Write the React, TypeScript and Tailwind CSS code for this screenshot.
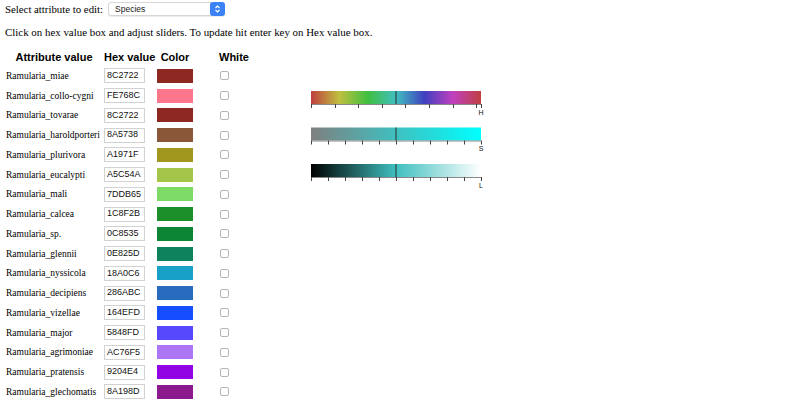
import React from 'react';

const rows: [string, string][] = [
  ['Ramularia_miae', '8C2722'],
  ['Ramularia_collo-cygni', 'FE768C'],
  ['Ramularia_tovarae', '8C2722'],
  ['Ramularia_haroldporteri', '8A5738'],
  ['Ramularia_plurivora', 'A1971F'],
  ['Ramularia_eucalypti', 'A5C54A'],
  ['Ramularia_mali', '7DDB65'],
  ['Ramularia_calcea', '1C8F2B'],
  ['Ramularia_sp.', '0C8535'],
  ['Ramularia_glennii', '0E825D'],
  ['Ramularia_nyssicola', '18A0C6'],
  ['Ramularia_decipiens', '286ABC'],
  ['Ramularia_vizellae', '164EFD'],
  ['Ramularia_major', '5848FD'],
  ['Ramularia_agrimoniae', 'AC76F5'],
  ['Ramularia_pratensis', '9204E4'],
  ['Ramularia_glechomatis', '8A198D'],
];

const W = 170;

// one slider: gradient bar, marker, d3-like axis below
function Slider({ id, y, stops, ticks, label }: { id: string; y: number; stops: string[]; ticks: number[]; label: string }) {
  return (
    <g transform={`translate(1, ${y})`}>
      <defs>
        <linearGradient id={id} x1="0" x2="1" y1="0" y2="0">
          {stops.map((c, i) => (
            <stop key={i} offset={i / (stops.length - 1)} stopColor={c} />
          ))}
        </linearGradient>
      </defs>
      <rect x={0} y={0} width={W} height={13} fill={`url(#${id})`} />
      <line x1={85} x2={85} y1={0} y2={13} stroke="#2b2b2b" strokeWidth={1} />
      <line x1={0} x2={W} y1={13.5} y2={13.5} stroke="#888" strokeWidth={1} />
      {ticks.map((t, i) => (
        <line key={i} x1={t + 0.5} x2={t + 0.5} y1={13} y2={17} stroke="#444" strokeWidth={1} />
      ))}
      <text x={W} y={23.5} fontSize={7} fontFamily="Liberation Sans, sans-serif" fill="#111" textAnchor="middle">
        {label}
      </text>
    </g>
  );
}

export default function App() {
  const hueTicks = [0, 50, 100, 150, 200, 250, 300, 350, 360].map((v) => Math.round((v / 360) * W));
  const tenTicks = Array.from({ length: 11 }, (_, i) => Math.round((i / 10) * W));
  const hueStops = Array.from({ length: 13 }, (_, i) => `hsl(${i * 30}, 50%, 50%)`);

  return (
    <div className="w-[800px] h-[410px] bg-white text-black overflow-hidden">
      <div className="flex items-center pl-[5px] h-[18px]">
        <span className="font-['Liberation_Serif',serif] text-[10.8px]">Select attribute to edit:</span>
        <div className="ml-[5px] w-[117px] h-[14px] flex items-center justify-between rounded-[3px] border border-[#d6d6d6] bg-white shadow-[0_1px_1px_rgba(0,0,0,0.08)]">
          <span className="pl-[6px] font-['Liberation_Sans',sans-serif] text-[8.5px] text-[#222]">Species</span>
          <div className="w-[15px] h-[14px] -mr-px rounded-[3px] bg-[#3b82f6] flex flex-col items-center justify-center">
            <svg width="7" height="10" viewBox="0 0 7 10">
              <path d="M1.5 4 L3.5 2 L5.5 4" fill="none" stroke="white" strokeWidth="1.2" />
              <path d="M1.5 6 L3.5 8 L5.5 6" fill="none" stroke="white" strokeWidth="1.2" />
            </svg>
          </div>
        </div>
      </div>

      <p className="pl-[5px] mt-[6px] font-['Liberation_Serif',serif] text-[10.9px] leading-[16px] whitespace-nowrap">
        Click on hex value box and adjust sliders. To update hit enter key on Hex value box.
      </p>

      <div className="flex mt-[8px]">
        <div className="w-[255px]">
          <div className="flex items-center h-[18px] font-['Liberation_Sans',sans-serif] font-bold text-[11px] whitespace-nowrap">
            <div className="ml-[6px] w-[96px] text-center">Attribute value</div>
            <div className="ml-[2px] w-[53px]">Hex value</div>
            <div className="w-[36px] text-center">Color</div>
            <div className="ml-[26px]">White</div>
          </div>
          {rows.map(([name, hex], i) => (
            <div key={i} className="flex items-center h-[19.75px]">
              <div className="w-[104px] pl-[6px] font-['Liberation_Serif',serif] text-[9.5px] whitespace-nowrap">
                {name}
              </div>
              <div className="w-[41px] h-[15px] border border-[#d2d2d2] flex items-center pl-[2px] font-['Liberation_Sans',sans-serif] text-[9px] text-[#111]">
                {hex}
              </div>
              <div className="ml-[12px] w-[36px] h-[14px]" style={{ backgroundColor: `#${hex}` }} />
              <div className="ml-[27px] w-[9px] h-[9px] rounded-[2px] border border-[#b5b5b5] bg-white" />
            </div>
          ))}
        </div>

        <div className="ml-[55px] mt-[43px]">
          <svg width="180" height="100" viewBox="0 0 180 100">
            <Slider id="gh" y={0} stops={hueStops} ticks={hueTicks} label="H" />
            <Slider id="gs" y={36.5} stops={['hsl(180,0%,50%)', 'hsl(180,100%,50%)']} ticks={tenTicks} label="S" />
            <Slider id="gl" y={73} stops={['#000000', 'hsl(180,50%,50%)', '#ffffff']} ticks={tenTicks} label="L" />
          </svg>
        </div>
      </div>
    </div>
  );
}
